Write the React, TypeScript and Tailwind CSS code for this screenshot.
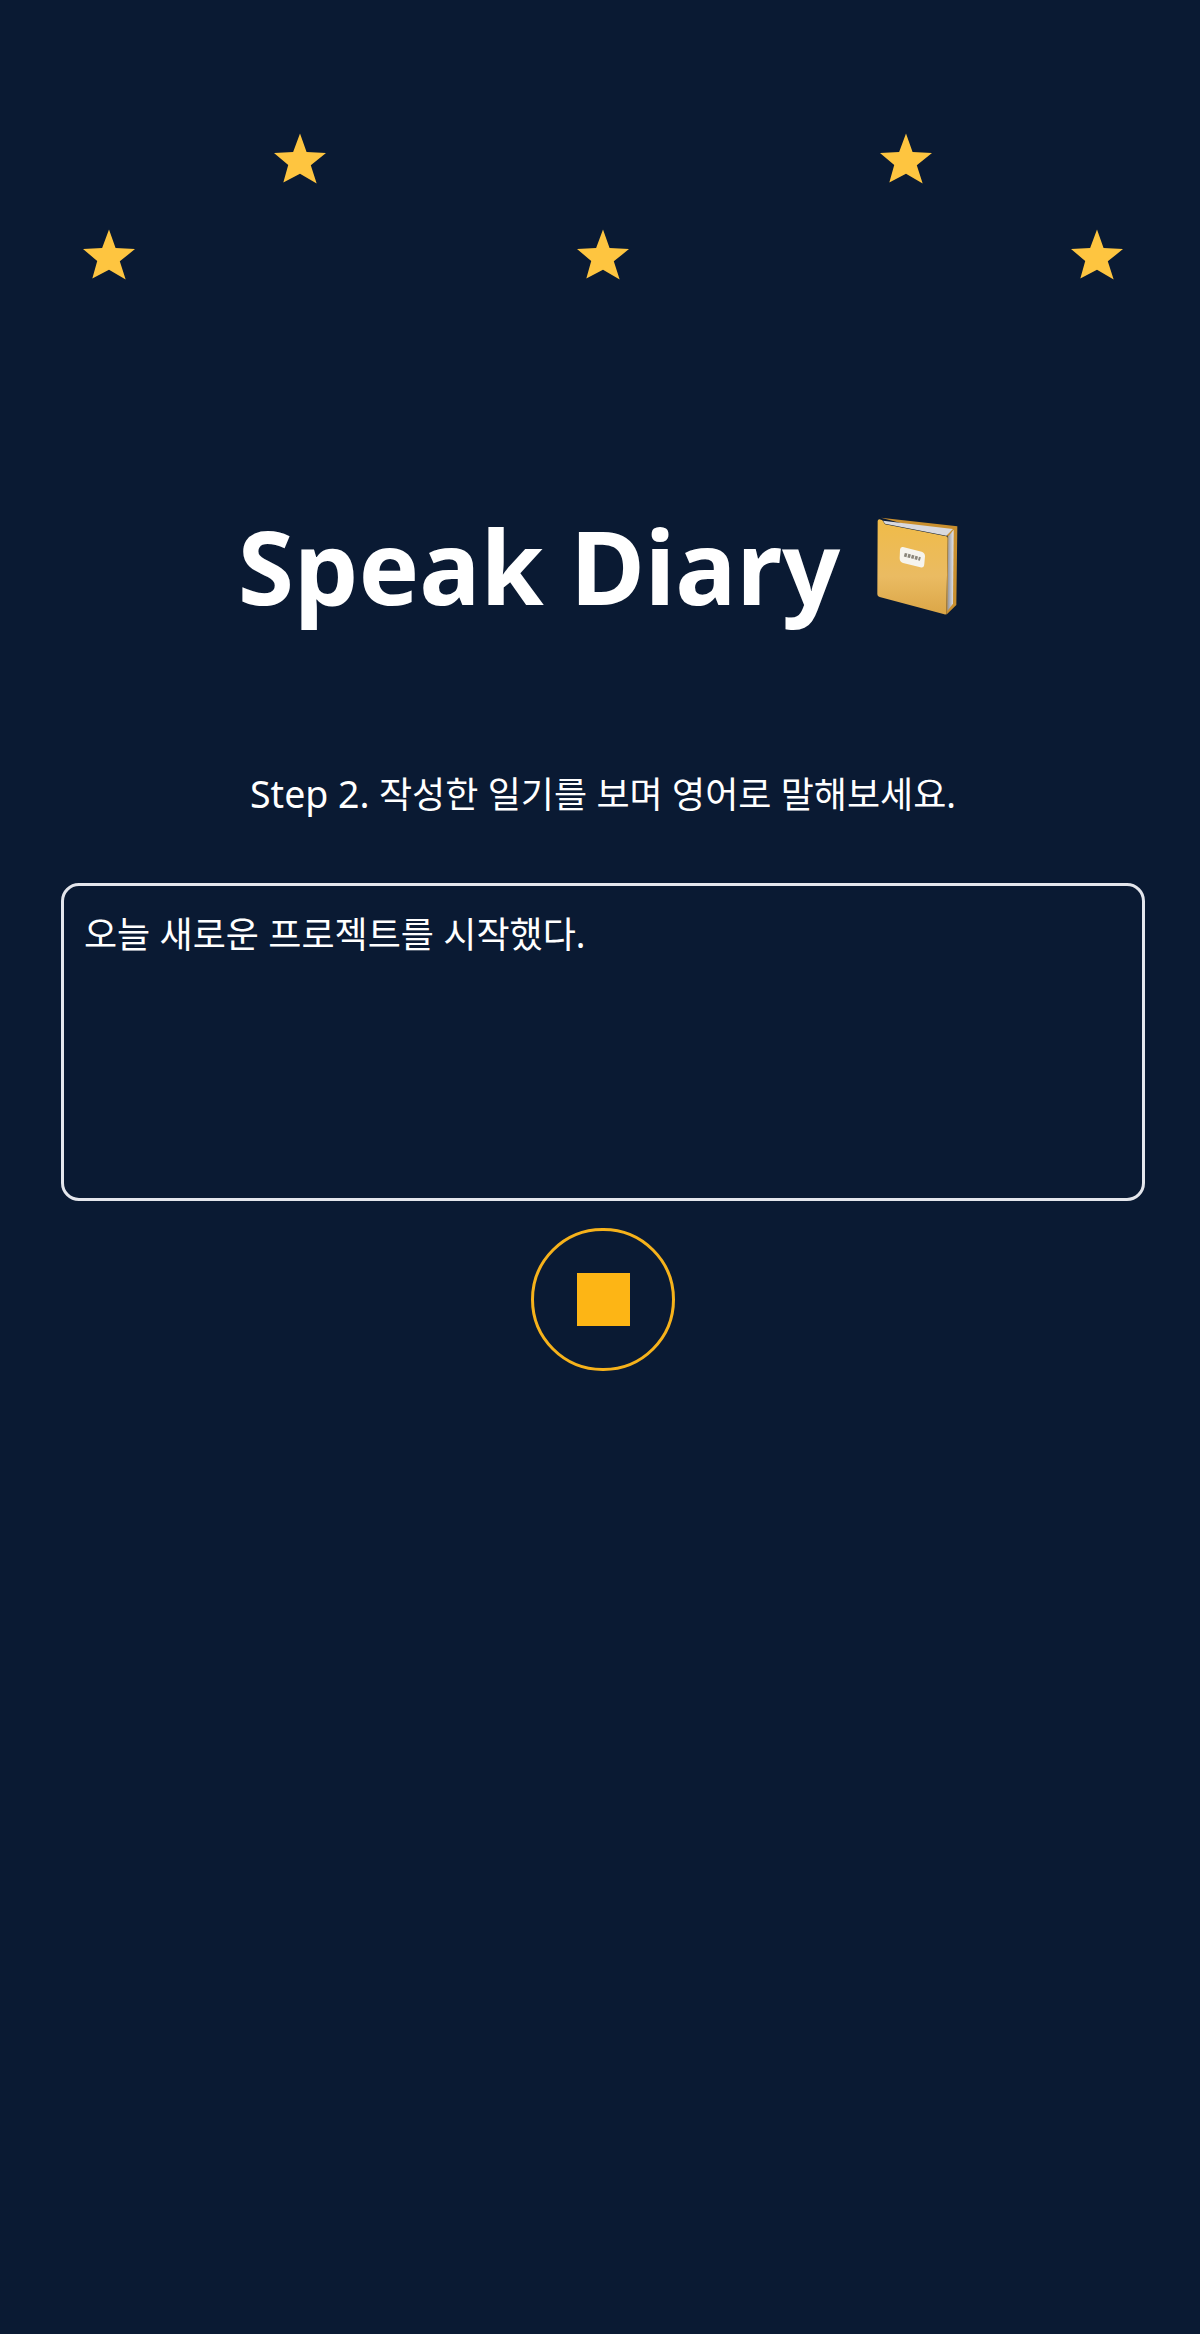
import React from 'react';

const Star = () => (
  <svg className="w-[52px] h-[51px] shrink-0" viewBox="0 0 53 51">
    <path d="M26.5 0 L33.2 19 L53 20 L37.5 32.5 L43.5 51 L26.5 41 L9.5 50 L14.5 32 L0 20 L19.5 19 Z" fill="#fec540" />
  </svg>
);

const NotebookEmoji = () => (
  <svg className="w-[81px] h-[98px] shrink-0" viewBox="84 52 243 294">
    <defs>
      <linearGradient id="cover" x1="0" y1="0" x2="0" y2="1">
        <stop offset="0" stopColor="#f0bb48" />
        <stop offset="0.6" stopColor="#eabb62" />
        <stop offset="1" stopColor="#dba647" />
      </linearGradient>
      <linearGradient id="pages" x1="0" y1="0" x2="1" y2="0">
        <stop offset="0" stopColor="#8d8f96" />
        <stop offset="1" stopColor="#e6e6ea" />
      </linearGradient>
    </defs>
    <path d="M96 54 L325 80 L322 316 L292 345 L296 108 Z" fill="#c98f2e" />
    <path d="M102 63 L312 88 L292 108 L108 72 Z" fill="#d9d9de" />
    <path d="M298 110 L314 90 L312 312 L295 334 Z" fill="url(#pages)" />
    <path d="M86 64 Q87 57 96 60 L100 62 L108 74 L292 110 Q296 111 296 116 L292 340 Q292 346 286 344 L92 292 Q85 290 85 284 Z" fill="url(#cover)" />
    <path d="M162 142 L218 156 Q228 159 228 170 L226 192 Q225 206 214 203 L162 190 Q152 187 152 176 L153 150 Q154 140 162 142 Z" fill="#f6f4ee" />
    <path d="M166 165 L214 178" stroke="#8a857a" strokeWidth="11" strokeDasharray="8 3" fill="none" />
  </svg>
);

export default function App() {
  return (
    <div
      className="w-[1200px] h-[2334px] overflow-hidden bg-[#0a1a33] text-white pt-[133px] pl-[6px]"
      style={{ fontFamily: '"Noto Sans", "Noto Sans CJK KR", sans-serif' }}
    >
      {/* Stars */}
      <div className="flex justify-between pl-[268px] pr-[268px] h-[96px]">
        <Star />
        <Star />
      </div>
      <div className="flex justify-between pl-[77px] pr-[77px] h-[51px]">
        <Star />
        <Star />
        <Star />
      </div>

      {/* Title */}
      <div className="flex items-center justify-center gap-[37px] mt-[230px] h-[112px] pr-[10px]">
        <h1 className="text-[102px] leading-[106px] font-bold">Speak Diary</h1>
        <NotebookEmoji />
      </div>

      <p className="text-center text-[36px] leading-[48px] mt-[148px]">
        <span className="text-[37.5px]">Step 2.</span> 작성한 일기를 보며 영어로 말해보세요.
      </p>

      {/* Diary text */}
      <div className="mx-[55px] mt-[64px] h-[318px] rounded-[18px] border-[3px] border-[#e4e6ec] px-[20px] pt-[25px] text-[36px] leading-[48px]">
        오늘 새로운 프로젝트를 시작했다.
      </div>

      {/* Stop button */}
      <div className="flex justify-center mt-[27px]">
        <button className="flex items-center justify-center w-[144px] h-[143px] rounded-full border-[3px] border-[#f6b21b]">
          <span className="block w-[53px] h-[53px] bg-[#fdb515]" />
        </button>
      </div>
    </div>
  );
}
